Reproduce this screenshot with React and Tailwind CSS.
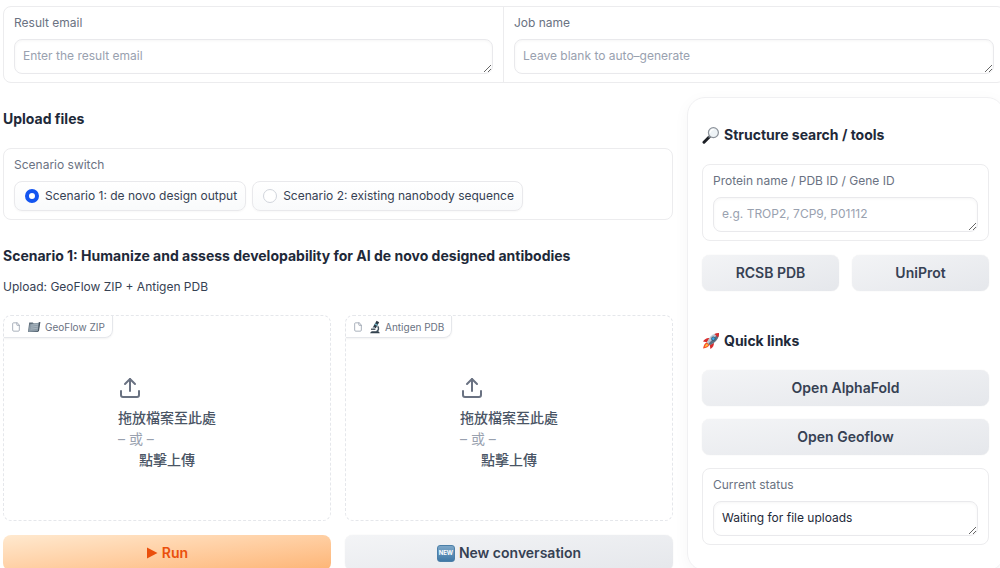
import { useState } from 'react';
import { File, Upload } from 'lucide-react';

function SearchGlyph() {
  return (
    <svg viewBox="0 0 18 18" className="w-[18px] h-[18px] shrink-0" aria-hidden="true">
      <path d="M2 16.2 7.2 11" stroke="#1d2026" strokeWidth="3" strokeLinecap="round" />
      <path d="M6.6 11.5 8 10" stroke="#7b828c" strokeWidth="1.8" />
      <circle cx="11.4" cy="6.6" r="5" fill="#eef3f6" stroke="#8c929a" strokeWidth="1.2" />
      <path d="M8.4 6.2c.2-1.6 1.4-2.7 3-2.8" fill="none" stroke="#fff" strokeWidth="1.1" strokeLinecap="round" />
    </svg>
  );
}

function RocketGlyph() {
  return (
    <svg viewBox="0 0 18 18" className="w-[18px] h-[18px] shrink-0" aria-hidden="true">
      <path d="M5 10.2C3 10.8 1.7 13 1 16.6c3.5-.6 5.8-1.8 6.6-3.8z" fill="#f6502b" />
      <path d="M5 11.8c-1.1.5-1.9 1.7-2.3 3.2 1.6-.4 2.8-1.1 3.4-2.1z" fill="#ffc83d" />
      <path d="M7.6 6.2C5 5.8 2.7 7 1 9.6l4.2.6z" fill="#d92c2c" />
      <path d="M11.8 10.4c.4 2.6-.8 4.9-3.4 6.6l-.6-4.2z" fill="#d92c2c" />
      <path d="M17 1c-4.3.1-7.7 1.9-10 5.4L4.8 10.2l3 3 3.8-2.2C15.1 8.7 16.9 5.3 17 1z" fill="#b9c6d2" />
      <path d="M17 1c-.1 4.3-1.9 7.7-5.4 10l-3.8 2.2-1.5-1.5z" fill="#5d7082" />
      <path d="M17 1c-1.7 0-3.2.3-4.6.9l3.7 3.7c.6-1.4.9-2.9.9-4.6z" fill="#d92c2c" />
      <circle cx="11.3" cy="6.7" r="1.8" fill="#31a6ea" stroke="#33475a" strokeWidth=".7" />
    </svg>
  );
}

function FolderGlyph() {
  return (
    <svg viewBox="0 0 14 12" className="w-3.5 h-3 shrink-0" aria-hidden="true">
      <path d="M2.2 1.5h3.6l1 1h5.7L11.2 11H1z" fill="#5c6b78" />
      <path d="M2.8 3.2 13 1.6 11.6 9.8 1.3 11z" fill="#8b9aa6" />
      <path d="m4.2 4.2 7.4-1M3.9 6.2l7.3-1M3.6 8.2l7.2-1" stroke="#b3bec7" strokeWidth=".7" />
      <path d="M11.8 1.2 13.4 1.1 12 10l-1.2.6z" fill="#46535f" />
    </svg>
  );
}

function MicroscopeGlyph() {
  return (
    <svg viewBox="0 0 12 14" className="w-3 h-3.5 shrink-0" aria-hidden="true">
      <path d="m7.6.8 2.6 1.5-3.4 6-2.7-1.5z" fill="#2d3a45" />
      <path d="m6.3 3.2 2.6 1.5-.7 1.2-2.6-1.5z" fill="#6fb3c6" />
      <path d="M8.7 6.3c1.5 1.9.9 4.2-1.2 5.4" fill="none" stroke="#41525f" strokeWidth="1.4" />
      <path d="M2 9.2h4.4" stroke="#2d3a45" strokeWidth="1.2" />
      <path d="M1.2 13.2c.4-1.3 1.3-1.9 2.6-1.9h4.6c1.2 0 2 .6 2.3 1.9z" fill="#33424e" />
      <path d="m4.1 6.8 1.7 1-.7 1.2-1.7-1z" fill="#8ea0ab" />
    </svg>
  );
}

function NewGlyph() {
  return (
    <span
      aria-hidden="true"
      className="flex items-center justify-center w-[18px] h-[17px] rounded-[3px] border border-[#4b7fa8] bg-linear-to-b from-[#7da7c8] to-[#3f78a6] text-[6px] leading-none font-bold text-white"
    >
      NEW
    </span>
  );
}

const cardClass = 'rounded-lg border border-[#ececee] bg-white';
const areaClass =
  'block w-full h-[35px] rounded-lg border border-[#e9e9ec] bg-white px-2 py-2 text-xs leading-4 text-gray-800 placeholder:text-gray-400 shadow-[inset_0_1px_3px_rgba(0,0,0,0.04)] overflow-hidden outline-none';
const secondaryButton =
  'flex items-center justify-center gap-1 w-full h-9 rounded-lg bg-linear-to-br from-gray-100 to-gray-200 text-sm font-semibold text-gray-700 shadow-[0_0_1px_rgba(0,0,0,0.15)] cursor-pointer';

function TextField({ id, label, placeholder, defaultValue }) {
  return (
    <div className="px-2.5 py-2">
      <label htmlFor={id} className="block mb-2 text-xs leading-4 text-gray-500">
        {label}
      </label>
      <textarea id={id} rows={1} className={areaClass} placeholder={placeholder} defaultValue={defaultValue} />
    </div>
  );
}

function Heading({ icon, children }) {
  return (
    <h3 className="flex items-center gap-1 text-sm leading-5 font-bold text-gray-800">
      {icon}
      {children}
    </h3>
  );
}

function DropZone({ label, icon }) {
  return (
    <div className="flex flex-col h-[206px] rounded-lg border border-dashed border-gray-200">
      <div className="flex items-center self-start h-[22px] px-[7px] rounded-tl-lg rounded-br-lg border-r border-b border-gray-200 text-[10px] leading-4 text-gray-500 shadow-[0_1px_2px_rgba(0,0,0,0.05)]">
        <File size={10} className="mr-1.5 text-gray-400" />
        <span className="flex items-center gap-1">
          {icon}
          {label}
        </span>
      </div>
      <button type="button" className="grow flex items-center justify-center pb-3 cursor-pointer">
        <span className="flex flex-col items-start text-sm leading-[21px] font-medium text-gray-600">
          <Upload size={24} strokeWidth={2} className="mb-[7px] text-gray-500" />
          <span>拖放檔案至此處</span>
          <span className="font-normal text-gray-400">– 或 –</span>
          <span className="self-center">點擊上傳</span>
        </span>
      </button>
    </div>
  );
}

const scenarios = [
  { id: 's1', label: 'Scenario 1: de novo design output' },
  { id: 's2', label: 'Scenario 2: existing nanobody sequence' },
];

export default function App() {
  const [scenario, setScenario] = useState('s1');

  return (
    <div className="h-screen overflow-x-hidden overflow-y-auto [scrollbar-width:none] bg-white font-['Inter','Noto_Sans_CJK_TC',sans-serif]">
      <div className="-mr-[5px] pl-[3px] pt-1.5 pb-4">
        {/* job details */}
        <div className="grid grid-cols-2 rounded-lg border border-[#ececee] divide-x divide-[#ececee]">
          <TextField id="email" label="Result email" placeholder="Enter the result email" />
          <TextField id="job" label="Job name" placeholder="Leave blank to auto–generate" />
        </div>

        <div className="grid grid-cols-[670fr_318fr] gap-3.5 mt-3.5">
          <main className="min-w-0 pt-3">
            <Heading>Upload files</Heading>

            <fieldset className={`mt-[19px] px-2.5 py-2 ${cardClass}`}>
              <legend className="float-left w-full mb-2 text-xs leading-4 text-gray-500">Scenario switch</legend>
              <div className="clear-both flex gap-1.5">
                {scenarios.map((s) => (
                  <label
                    key={s.id}
                    className="flex items-center gap-1.5 h-[30px] pl-2.5 pr-2 rounded-lg border border-[#e9e9ec] bg-linear-to-b from-white to-gray-50 text-xs leading-4 text-gray-700 shadow-[0_1px_2px_rgba(0,0,0,0.03)] cursor-pointer"
                  >
                    <input
                      type="radio"
                      name="scenario"
                      value={s.id}
                      checked={scenario === s.id}
                      onChange={() => setScenario(s.id)}
                      className="appearance-none w-3.5 h-3.5 rounded-full border border-gray-300 bg-white checked:border-4 checked:border-[#1455f0]"
                    />
                    {s.label}
                  </label>
                ))}
              </div>
            </fieldset>

            <div className="mt-[26px]">
              <Heading>Scenario 1: Humanize and assess developability for AI de novo designed antibodies</Heading>
            </div>
            <p className="mt-[11px] text-xs leading-5 text-gray-700">Upload: GeoFlow ZIP + Antigen PDB</p>

            <div className="grid grid-cols-2 gap-3.5 mt-[18px]">
              <DropZone label="GeoFlow ZIP" icon={<FolderGlyph />} />
              <DropZone label="Antigen PDB" icon={<MicroscopeGlyph />} />
              <button
                type="button"
                className="flex items-center justify-center gap-1 h-9 rounded-lg bg-linear-to-br from-[#ffe9cf] to-[#fdb474] text-sm font-semibold text-[#ea4f0c] cursor-pointer"
              >
                <svg viewBox="0 0 12 12" className="w-3 h-3" aria-hidden="true">
                  <path d="M1 .5v11L11.5 6z" fill="currentColor" />
                </svg>
                Run
              </button>
              <button type="button" className={secondaryButton}>
                <NewGlyph />
                New conversation
              </button>
            </div>
          </main>

          <aside className="min-w-0 pl-3.5 pr-[15px] pt-[27px] pb-4 rounded-[18px] border border-[#f0f0f2] shadow-[0_4px_16px_rgba(0,0,0,0.04)]">
            <Heading icon={<SearchGlyph />}>Structure search / tools</Heading>
            <div className={`mt-[19px] ${cardClass}`}>
              <TextField id="protein" label="Protein name / PDB ID / Gene ID" placeholder="e.g. TROP2, 7CP9, P01112" />
            </div>
            <div className="grid grid-cols-2 gap-[13px] mt-3.5 mb-10">
              <button type="button" className={secondaryButton}>
                RCSB PDB
              </button>
              <button type="button" className={secondaryButton}>
                UniProt
              </button>
            </div>

            <Heading icon={<RocketGlyph />}>Quick links</Heading>
            <div className="flex flex-col gap-[13px] mt-[19px]">
              <button type="button" className={secondaryButton}>
                Open AlphaFold
              </button>
              <button type="button" className={secondaryButton}>
                Open Geoflow
              </button>
              <div className={cardClass}>
                <TextField id="status" label="Current status" defaultValue="Waiting for file uploads" />
              </div>
            </div>
          </aside>
        </div>
      </div>
    </div>
  );
}
